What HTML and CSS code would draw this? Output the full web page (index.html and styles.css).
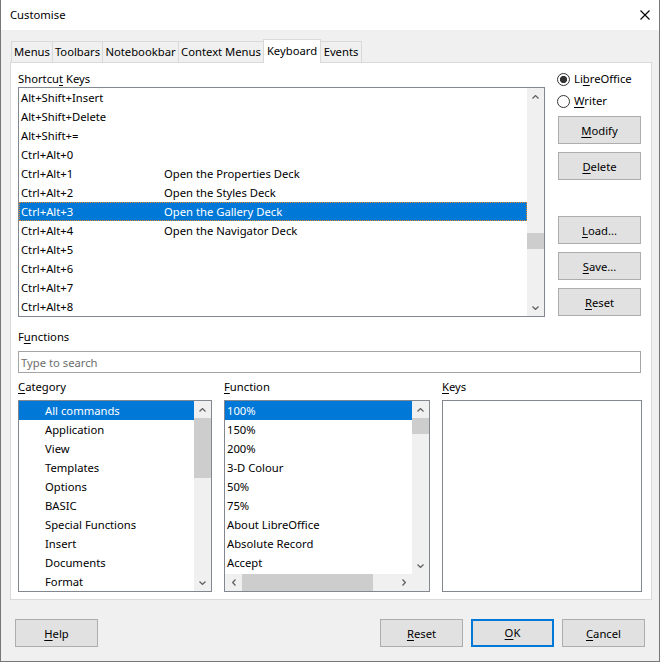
FILE: index.html
```html
<!DOCTYPE html>
<html>
<head>
<meta charset="utf-8">
<title>Customise</title>
<link rel="stylesheet" href="styles.css">
</head>
<body>
<div class="window">
  <div class="titlebar">
    <span class="title">Customise</span>
    <svg class="close" width="10" height="10" viewBox="0 0 10 10"><path d="M0.5 0.5 L9.5 9.5 M9.5 0.5 L0.5 9.5" stroke="#000" stroke-width="1.1" fill="none"/></svg>
  </div>
  <div class="body">
    <div class="tabs">
      <div class="tab">Menus</div>
      <div class="tab">Toolbars</div>
      <div class="tab">Notebookbar</div>
      <div class="tab">Context Menus</div>
      <div class="tab active">Keyboard</div>
      <div class="tab">Events</div>
    </div>
    <div class="panel">
      <div class="top">
        <div class="shortcuts">
          <div class="label">Shortcu<u>t</u> Keys</div>
          <div class="listbox sc-box">
            <div class="rows">
              <div class="row"><span class="key">Alt+Shift+Insert</span></div>
              <div class="row"><span class="key">Alt+Shift+Delete</span></div>
              <div class="row"><span class="key">Alt+Shift+=</span></div>
              <div class="row"><span class="key">Ctrl+Alt+0</span></div>
              <div class="row"><span class="key">Ctrl+Alt+1</span><span>Open the Properties Deck</span></div>
              <div class="row"><span class="key">Ctrl+Alt+2</span><span>Open the Styles Deck</span></div>
              <div class="row selected focus"><span class="key">Ctrl+Alt+3</span><span>Open the Gallery Deck</span></div>
              <div class="row"><span class="key">Ctrl+Alt+4</span><span>Open the Navigator Deck</span></div>
              <div class="row"><span class="key">Ctrl+Alt+5</span></div>
              <div class="row"><span class="key">Ctrl+Alt+6</span></div>
              <div class="row"><span class="key">Ctrl+Alt+7</span></div>
              <div class="row"><span class="key">Ctrl+Alt+8</span></div>
            </div>
            <div class="vscroll">
              <div class="arrow"><svg width="7" height="4" viewBox="0 0 7 4"><path d="M0.5 3.5 L3.5 0.6 L6.5 3.5" stroke="#606060" stroke-width="1.3" fill="none"/></svg></div>
              <div class="track"><div class="thumb sc-thumb"></div></div>
              <div class="arrow"><svg width="7" height="4" viewBox="0 0 7 4"><path d="M0.5 0.5 L3.5 3.4 L6.5 0.5" stroke="#606060" stroke-width="1.3" fill="none"/></svg></div>
            </div>
          </div>
        </div>
        <div class="side">
          <div class="radio-row"><span class="radio checked"></span><span>Li<u>b</u>reOffice</span></div>
          <div class="radio-row second"><span class="radio"></span><span><u>W</u>riter</span></div>
          <div class="btn modify"><u>M</u>odify</div>
          <div class="btn gap8"><u>D</u>elete</div>
          <div class="btn load"><u>L</u>oad...</div>
          <div class="btn gap8"><u>S</u>ave...</div>
          <div class="btn gap8"><u>R</u>eset</div>
        </div>
      </div>

      <div class="label functions">F<u>u</u>nctions</div>
      <div class="search">Type to search</div>

      <div class="lists">
        <div class="col">
          <div class="label"><u>C</u>ategory</div>
          <div class="listbox low-box">
            <div class="rows">
              <div class="row tree selected">All commands</div>
              <div class="row tree">Application</div>
              <div class="row tree">View</div>
              <div class="row tree">Templates</div>
              <div class="row tree">Options</div>
              <div class="row tree">BASIC</div>
              <div class="row tree">Special Functions</div>
              <div class="row tree">Insert</div>
              <div class="row tree">Documents</div>
              <div class="row tree">Format</div>
            </div>
            <div class="vscroll">
              <div class="arrow"><svg width="7" height="4" viewBox="0 0 7 4"><path d="M0.5 3.5 L3.5 0.6 L6.5 3.5" stroke="#606060" stroke-width="1.3" fill="none"/></svg></div>
              <div class="track"><div class="thumb cat-thumb"></div></div>
              <div class="arrow"><svg width="7" height="4" viewBox="0 0 7 4"><path d="M0.5 0.5 L3.5 3.4 L6.5 0.5" stroke="#606060" stroke-width="1.3" fill="none"/></svg></div>
            </div>
          </div>
        </div>
        <div class="col">
          <div class="label"><u>F</u>unction</div>
          <div class="listbox low-box fn-box">
            <div class="fn-main">
              <div class="rows">
                <div class="row selected">100%</div>
                <div class="row">150%</div>
                <div class="row">200%</div>
                <div class="row">3-D Colour</div>
                <div class="row">50%</div>
                <div class="row">75%</div>
                <div class="row">About LibreOffice</div>
                <div class="row">Absolute Record</div>
                <div class="row">Accept</div>
              </div>
              <div class="vscroll">
                <div class="arrow"><svg width="7" height="4" viewBox="0 0 7 4"><path d="M0.5 3.5 L3.5 0.6 L6.5 3.5" stroke="#606060" stroke-width="1.3" fill="none"/></svg></div>
                <div class="track"><div class="thumb fn-thumb"></div></div>
                <div class="arrow"><svg width="7" height="4" viewBox="0 0 7 4"><path d="M0.5 0.5 L3.5 3.4 L6.5 0.5" stroke="#606060" stroke-width="1.3" fill="none"/></svg></div>
              </div>
            </div>
            <div class="hscroll">
              <div class="harrow"><svg width="4" height="7" viewBox="0 0 4 7"><path d="M3.5 0.5 L0.6 3.5 L3.5 6.5" stroke="#606060" stroke-width="1.3" fill="none"/></svg></div>
              <div class="htrack"><div class="hthumb"></div></div>
              <div class="harrow"><svg width="4" height="7" viewBox="0 0 4 7"><path d="M0.5 0.5 L3.4 3.5 L0.5 6.5" stroke="#606060" stroke-width="1.3" fill="none"/></svg></div>
              <div class="corner"></div>
            </div>
          </div>
        </div>
        <div class="col">
          <div class="label"><u>K</u>eys</div>
          <div class="listbox low-box"></div>
        </div>
      </div>
    </div>

    <div class="footer">
      <div class="btn"><u>H</u>elp</div>
      <div class="footer-right">
        <div class="btn"><u>R</u>eset</div>
        <div class="btn default"><u>O</u>K</div>
        <div class="btn"><u>C</u>ancel</div>
      </div>
    </div>
  </div>
</div>
</body>
</html>
```
FILE: styles.css
```css
* { box-sizing: border-box; }
html, body { margin: 0; padding: 0; background: #f0f0f0; }
body {
  font-family: "Noto Sans", "Open Sans", sans-serif;
  font-size: 11.25px;
  line-height: 16px;
  color: #000;
}
u { text-decoration: underline; text-underline-offset: 2px; text-decoration-thickness: 1px; }

.window {
  width: 660px;
  height: 662px;
  border: 1px solid #777;
  border-top: none;
  display: flex;
  flex-direction: column;
  background: #f0f0f0;
}
.titlebar {
  height: 30px;
  flex: none;
  background: #fff;
  display: flex;
  align-items: center;
  justify-content: space-between;
  padding: 0 9px;
}
.close { display: block; }

.body {
  flex: 1;
  display: flex;
  flex-direction: column;
  padding: 9px 7px 0 9px;
}

/* tabs */
.tabs {
  height: 23px;
  display: flex;
  align-items: flex-end;
  padding-left: 1px;
}
.tab {
  height: 21px;
  border: 1px solid #d9d9d9;
  border-bottom: none;
  border-right: none;
  background: #f0f0f0;
  text-align: center;
  padding-top: 2px;
  white-space: nowrap;
}
.tab:nth-child(1) { width: 41px; }
.tab:nth-child(2) { width: 50px; }
.tab:nth-child(3) { width: 76px; }
.tab:nth-child(4) { width: 85px; }
.tab:nth-child(5) { width: 58px; }
.tab:nth-child(6) { width: 41px; border-right: 1px solid #d9d9d9; border-left: none; }
.tab.active {
  height: 24px;
  margin-bottom: -1px;
  background: #fff;
  border-right: 1px solid #d9d9d9;
  padding-top: 3px;
  position: relative;
  z-index: 1;
}

/* panel */
.panel {
  height: 538px;
  flex: none;
  background: #fff;
  border: 1px solid #d9d9d9;
  padding: 8px 8px 7px 7px;
}
.label { height: 16px; white-space: nowrap; }

.top { display: flex; }
.shortcuts { width: 527px; }
.side {
  margin-left: 12px;
  width: 85px;
  display: flex;
  flex-direction: column;
}
.radio-row {
  height: 16px;
  display: flex;
  align-items: center;
  gap: 4px;
}
.radio-row.second { margin-top: 6px; }
.radio {
  width: 13px;
  height: 13px;
  border: 1px solid #333;
  border-radius: 50%;
  background: #fff;
  flex: none;
}
.radio.checked {
  background: radial-gradient(circle, #333 0 3.3px, #fff 3.9px);
}

.btn {
  width: 83px;
  height: 28px;
  background: #e1e1e1;
  border: 1px solid #adadad;
  text-align: center;
  line-height: 23px;
  padding-top: 2px;
}
.side .btn { margin-left: 1px; }
.btn.modify { margin-top: 7px; }
.btn.gap8 { margin-top: 8px; }
.btn.load { margin-top: 36px; }
.btn.default { border: 2px solid #0078d7; line-height: 21px; padding-top: 1px; }

/* list boxes */
.listbox {
  border: 1px solid #828790;
  background: #fff;
  display: flex;
  overflow: hidden;
}
.sc-box { height: 230px; }
.rows { flex: 1; overflow: hidden; min-width: 0; }
.row {
  height: 19px;
  line-height: 18px;
  padding-top: 1px;
  padding-left: 2px;
  white-space: nowrap;
  display: flex;
}
.row .key { width: 143px; flex: none; }
.row.tree { padding-left: 26px; }
.row.selected { background: #0078d7; color: #fff; }
.row.focus { outline: 1px dotted #e58a1f; outline-offset: -1px; }

.vscroll {
  width: 17px;
  flex: none;
  background: #f0f0f0;
  display: flex;
  flex-direction: column;
}
.arrow {
  height: 17px;
  flex: none;
  display: flex;
  align-items: center;
  justify-content: center;
}
.arrow svg, .harrow svg { display: block; }
.track { flex: 1; }
.thumb { background: #cdcdcd; }
.sc-thumb { margin-top: 128px; height: 16px; }
.cat-thumb { height: 60px; }
.fn-thumb { height: 16px; }

/* functions */
.label.functions { margin-top: 12px; }
.search {
  margin-top: 6px;
  width: 623px;
  height: 22px;
  border: 1px solid #a5a5a5;
  background: #fff;
  color: #6d6d6d;
  padding-left: 2px;
  line-height: 19px;
  padding-top: 1px;
}
.lists {
  margin-top: 6px;
  display: grid;
  grid-template-columns: 194px 206px 200px;
  column-gap: 12px;
}
.low-box { height: 192px; margin-top: 5px; }
.fn-box { flex-direction: column; }
.fn-main { flex: 1; display: flex; min-height: 0; }
.hscroll {
  height: 17px;
  flex: none;
  display: flex;
  background: #f0f0f0;
}
.harrow {
  width: 17px;
  flex: none;
  display: flex;
  align-items: center;
  justify-content: center;
}
.htrack { flex: 1; }
.hthumb { width: 131px; height: 17px; background: #cdcdcd; }
.corner { width: 17px; flex: none; background: #f0f0f0; }

/* footer */
.footer {
  display: flex;
  justify-content: space-between;
  padding: 19px 7px 14px 5px;
}
.footer-right { display: flex; gap: 8px; }
```
